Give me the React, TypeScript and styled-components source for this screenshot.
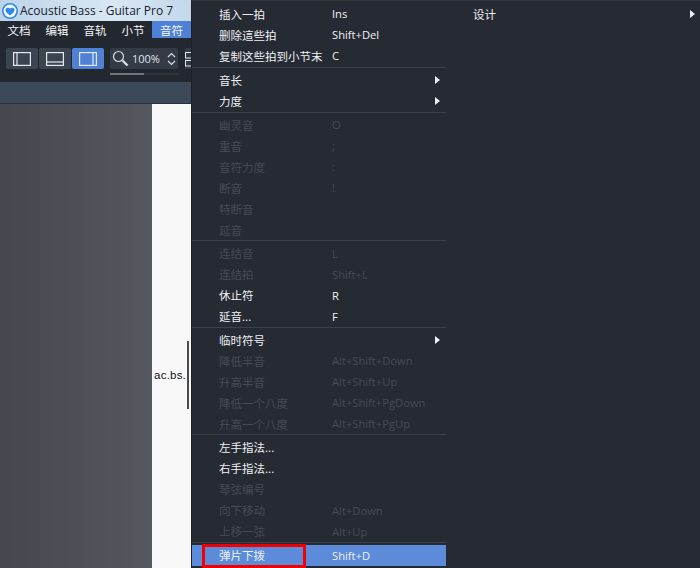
import * as React from 'react';
import styled, { createGlobalStyle } from 'styled-components';

const GlobalStyle = createGlobalStyle`
    html, body {
        margin: 0;
        padding: 0;
        background: #262a33;
    }
    body {
        font-family: "Noto Sans", "Noto Sans CJK SC", sans-serif;
    }
`;

const CJK = '"Noto Sans", "Noto Sans CJK SC", sans-serif';

const Screen = styled.div`
    width: 700px;
    height: 568px;
    display: flex;
    overflow: hidden;
`;

const AppWindow = styled.div`
    width: 191px;
    flex-shrink: 0;
    display: flex;
    flex-direction: column;
    background: #23272f;
`;

const TitleBar = styled.div`
    height: 21px;
    display: flex;
    align-items: center;
    gap: 2px;
    padding-left: 2px;
    background: linear-gradient(90deg, #bcd3e8, #d9e7f3 60%, #c3d8ea);
    color: #16202c;
    font-family: "Open Sans", sans-serif;
    font-size: 12px;
    white-space: nowrap;
    overflow: hidden;
`;

const MenuBar = styled.div`
    height: 17px;
    display: flex;
    background: #23272f;
`;

const MenuBarItem = styled.div<{ $active?: boolean; $width: number }>`
    width: ${p => p.$width}px;
    display: flex;
    align-items: center;
    justify-content: center;
    font-size: 11.5px;
    color: #f2f4f6;
    background: ${p => (p.$active ? '#4f82d6' : 'transparent')};
`;

const Toolbar = styled.div`
    height: 44px;
    display: flex;
    gap: 6px;
    padding: 10px 0 0 6px;
    box-sizing: border-box;
    background: #23272f;
    overflow: hidden;
`;

const ButtonGroup = styled.div`
    height: 21px;
    display: flex;
    gap: 1px;
`;

const PaneButton = styled.div<{ $active?: boolean }>`
    width: 32px;
    height: 21px;
    display: flex;
    align-items: center;
    justify-content: center;
    border-radius: 2px;
    background: ${p => (p.$active ? '#4f82d6' : '#3b4552')};
`;

const ZoomColumn = styled.div`
    display: flex;
    flex-direction: column;
    gap: 4px;
`;

const ZoomBox = styled.div`
    width: 68px;
    height: 21px;
    display: flex;
    align-items: center;
    gap: 3px;
    padding-left: 2px;
    box-sizing: border-box;
    border-radius: 2px;
    background: #333b47;
    color: #dfe3e8;
    font-family: "Open Sans", sans-serif;
    font-size: 11px;
`;

const ZoomTrack = styled.div`
    width: 69px;
    height: 2px;
    background: #2e333c;
`;

const ZoomFill = styled.div`
    width: 34px;
    height: 2px;
    background: #70757d;
`;

const GridButton = styled.div`
    width: 14px;
    height: 21px;
    display: flex;
    align-items: center;
    justify-content: center;
    background: #333b47;
`;

const Band = styled.div`
    height: 21px;
    background: #3c4959;
`;

const Workspace = styled.div`
    flex: 1;
    display: flex;
    border-top: 1px solid #2b3038;
`;

const Canvas = styled.div`
    width: 152px;
    background: linear-gradient(90deg, #44474d, #55585e);
`;

const Page = styled.div`
    flex: 1;
    display: flex;
    align-items: flex-start;
    justify-content: flex-end;
    padding: 237px 2px 0 0;
    background: #f8f8f8;
`;

const PageEdge = styled.div`
    width: 35px;
    height: 68px;
    display: flex;
    align-items: center;
    justify-content: flex-end;
    padding-right: 1px;
    box-sizing: border-box;
    border-right: 2px solid #4a4a4a;
    color: #111;
    font-family: "Liberation Sans", sans-serif;
    font-size: 11.5px;
    letter-spacing: 0.2px;
`;

const MenuPanel = styled.div`
    flex: 1;
    display: flex;
    background: #262a33;
    border-top: 1px solid #2f343d;
    border-left: 1px solid #1d2027;
    box-sizing: border-box;
`;

const MenuColumn = styled.div`
    width: 254px;
    padding-top: 2.4px;
    display: flex;
    flex-direction: column;
    flex-shrink: 0;
`;

const SideColumn = styled.div`
    flex: 1;
    padding-top: 2.4px;
`;

const Row = styled.div<{ $disabled?: boolean; $selected?: boolean }>`
    position: relative;
    height: 21px;
    display: flex;
    align-items: center;
    padding-left: 27px;
    font-family: ${CJK};
    font-size: 11.5px;
    white-space: nowrap;
    color: ${p => (p.$disabled ? '#454a54' : '#eef0f3')};
    background: ${p => (p.$selected ? '#5b8bd9' : 'transparent')};
`;

const SideRow = styled(Row)`
    justify-content: space-between;
    padding: 0 5px 0 27px;
`;

const Label = styled.span`
    width: 113px;
    flex-shrink: 0;
`;

const Shortcut = styled.span`
    flex: 1;
    font-family: "Open Sans", sans-serif;
    font-size: 11.2px;
`;

const Arrow = styled.span`
    width: 0;
    height: 0;
    margin-right: 6px;
    border-left: 5px solid #eef0f3;
    border-top: 4.5px solid transparent;
    border-bottom: 4.5px solid transparent;
`;

const SideArrow = styled(Arrow)`
    margin-right: 0;
`;

const Separator = styled.div<{ $first?: boolean }>`
    height: 1px;
    margin-top: ${p => (p.$first ? 0.6 : 0)}px;
    margin-bottom: 1.6px;
    background: #3b404a;
`;

// Red annotation drawn over the selected row in the screenshot.
const Callout = styled.div`
    position: absolute;
    left: 10px;
    top: -1px;
    width: 104px;
    height: 24px;
    box-sizing: border-box;
    border: 3px solid #f00000;
`;

type Item = { label: string; shortcut?: string; disabled?: boolean; submenu?: boolean; selected?: boolean };

const sections: Item[][] = [
    [
        { label: '插入一拍', shortcut: 'Ins' },
        { label: '删除這些拍', shortcut: 'Shift+Del' },
        { label: '复制这些拍到小节末', shortcut: 'C' },
    ],
    [
        { label: '音长', submenu: true },
        { label: '力度', submenu: true },
    ],
    [
        { label: '幽灵音', shortcut: 'O', disabled: true },
        { label: '重音', shortcut: ';', disabled: true },
        { label: '音符力度', shortcut: ':', disabled: true },
        { label: '断音', shortcut: '!', disabled: true },
        { label: '特断音', disabled: true },
        { label: '延音', disabled: true },
    ],
    [
        { label: '连结音', shortcut: 'L', disabled: true },
        { label: '连结拍', shortcut: 'Shift+L', disabled: true },
        { label: '休止符', shortcut: 'R' },
        { label: '延音...', shortcut: 'F' },
    ],
    [
        { label: '临时符号', submenu: true },
        { label: '降低半音', shortcut: 'Alt+Shift+Down', disabled: true },
        { label: '升高半音', shortcut: 'Alt+Shift+Up', disabled: true },
        { label: '降低一个八度', shortcut: 'Alt+Shift+PgDown', disabled: true },
        { label: '升高一个八度', shortcut: 'Alt+Shift+PgUp', disabled: true },
    ],
    [
        { label: '左手指法...' },
        { label: '右手指法...' },
        { label: '琴弦编号', disabled: true },
        { label: '向下移动', shortcut: 'Alt+Down', disabled: true },
        { label: '上移一弦', shortcut: 'Alt+Up', disabled: true },
    ],
    [{ label: '弹片下拨', shortcut: 'Shift+D', selected: true }],
];

const topMenus = [
    { label: '文档', width: 38 },
    { label: '编辑', width: 38 },
    { label: '音轨', width: 38 },
    { label: '小节', width: 38 },
    { label: '音符', width: 39, active: true },
];

const AppLogo = () => (
    <svg width="16" height="16" viewBox="0 0 16 16">
        <circle cx="8" cy="8" r="8" fill="#2f8ae8" />
        <circle cx="8" cy="8" r="6.4" fill="#f4f9fe" />
        <path d="M3.6 6.2C4.4 4.6 6.6 4.6 8 5.4c1.4-.8 3.6-.8 4.4.8.7 1.5-.6 3.6-4.4 6.2C4.200 9.800 2.900 7.700 3.600 6.200z" fill="#2f8ae8" />
    </svg>
);

const PaneIcon = ({ side }: { side: 'left' | 'bottom' | 'right' }) => (
    <svg width="18" height="14" viewBox="0 0 18 14" fill="none" stroke="#e4e8ec" strokeWidth="1.2">
        <rect x="0.6" y="0.6" width="16.8" height="12.8" />
        {side === 'left' && <path d="M4 1v12" />}
        {side === 'bottom' && <path d="M1 10h16" />}
        {side === 'right' && <path d="M14 1v12" />}
    </svg>
);

export default function App() {
    return (
        <Screen>
            <GlobalStyle />
            <AppWindow>
                <TitleBar>
                    <AppLogo />
                    <span>Acoustic Bass - Guitar Pro 7</span>
                </TitleBar>
                <MenuBar>
                    {topMenus.map(m => (
                        <MenuBarItem key={m.label} $width={m.width} $active={m.active}>{m.label}</MenuBarItem>
                    ))}
                </MenuBar>
                <Toolbar>
                    <ButtonGroup>
                        <PaneButton><PaneIcon side="left" /></PaneButton>
                        <PaneButton><PaneIcon side="bottom" /></PaneButton>
                        <PaneButton $active><PaneIcon side="right" /></PaneButton>
                    </ButtonGroup>
                    <ZoomColumn>
                        <ZoomBox>
                            <svg width="17" height="17" viewBox="0 0 17 17" fill="none" stroke="#d8dce1">
                                <circle cx="6.5" cy="6.5" r="5" strokeWidth="1.2" />
                                <path d="M10.5 10.5l5 5" strokeWidth="2.4" />
                            </svg>
                            <span>100%</span>
                            <svg width="9" height="14" viewBox="0 0 9 14" fill="none" stroke="#d8dce1" strokeWidth="1.2" style={{ marginLeft: 4 }}>
                                <path d="M1 5l3.5-3.5L8 5M1 9l3.5 3.5L8 9" />
                            </svg>
                        </ZoomBox>
                        <ZoomTrack><ZoomFill /></ZoomTrack>
                    </ZoomColumn>
                    <GridButton>
                        <svg width="8" height="16" viewBox="0 0 8 16" fill="none" stroke="#e4e8ec">
                            <rect x="0.5" y="1.5" width="6" height="5.5" />
                            <rect x="0.5" y="9.5" width="6" height="5.5" />
                        </svg>
                    </GridButton>
                </Toolbar>
                <Band />
                <Workspace>
                    <Canvas />
                    <Page>
                        <PageEdge>ac.bs.</PageEdge>
                    </Page>
                </Workspace>
            </AppWindow>
            <MenuPanel>
                <MenuColumn>
                    {sections.map((items, i) => (
                        <React.Fragment key={i}>
                            {items.map(item => (
                                <Row key={item.label} $disabled={item.disabled} $selected={item.selected}>
                                    <Label>{item.label}</Label>
                                    <Shortcut>{item.shortcut}</Shortcut>
                                    {item.submenu && <Arrow />}
                                    {item.selected && <Callout />}
                                </Row>
                            ))}
                            {i < sections.length - 1 && <Separator $first={i === 0} />}
                        </React.Fragment>
                    ))}
                </MenuColumn>
                <SideColumn>
                    <SideRow>
                        <span>设计</span>
                        <SideArrow />
                    </SideRow>
                </SideColumn>
            </MenuPanel>
        </Screen>
    );
}
